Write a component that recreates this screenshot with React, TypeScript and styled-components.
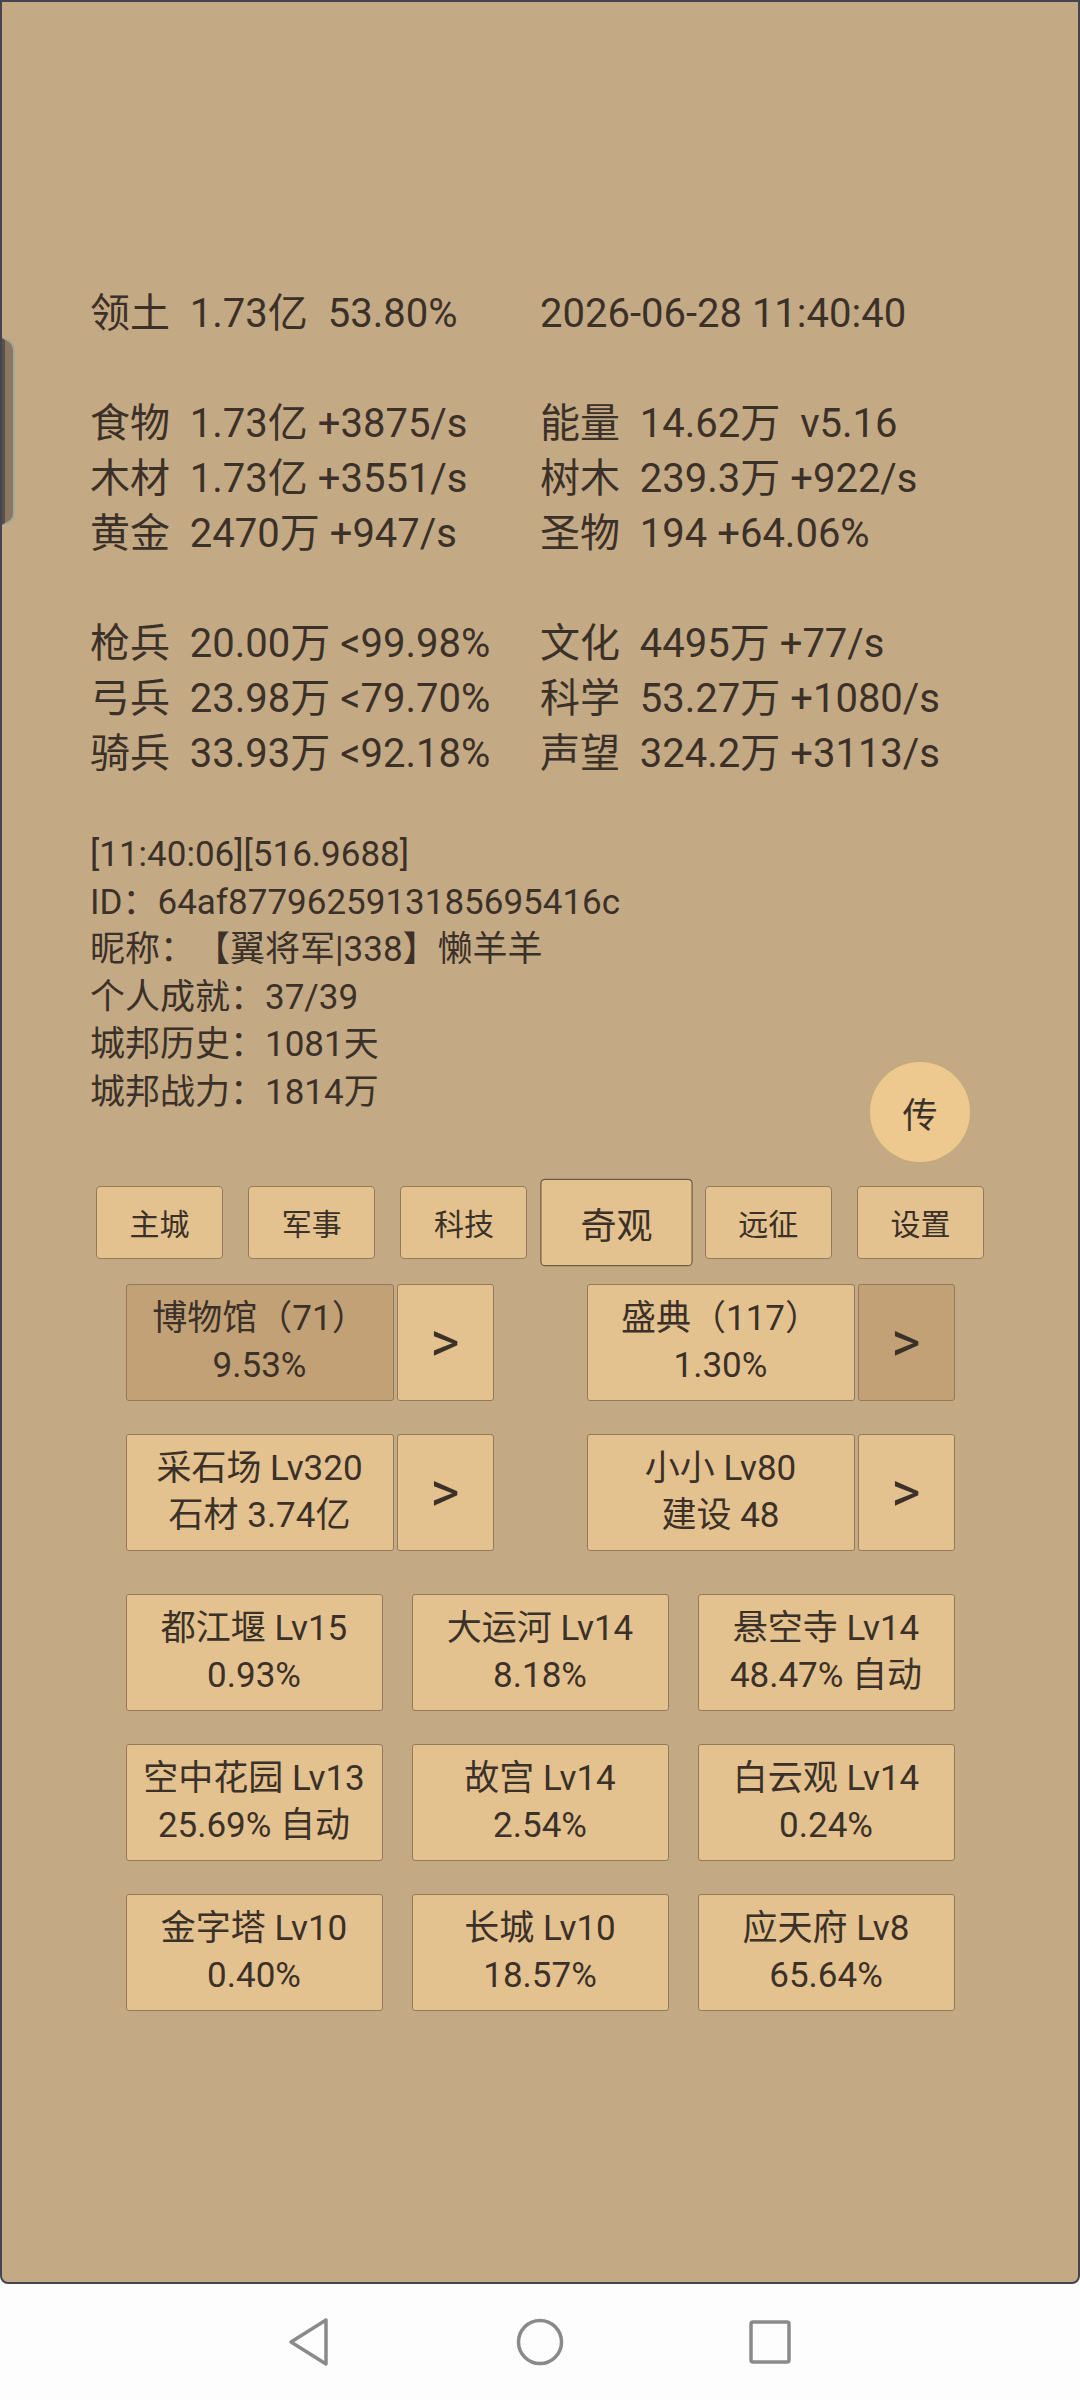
import styled, { createGlobalStyle } from 'styled-components'

const GlobalStyle = createGlobalStyle`
  html, body {
    margin: 0;
    padding: 0;
    background: #fdfdfd;
  }
  * {
    box-sizing: border-box;
  }
`

const FONT = `Roboto, "Noto Sans CJK SC", sans-serif`

const Phone = styled.div`
  width: 1080px;
  height: 2400px;
  display: flex;
  flex-direction: column;
  font-family: ${FONT};
  color: #3b3128;
  text-spacing-trim: space-all;
`

const Screen = styled.div`
  position: relative;
  height: 2284px;
  background: #c4a985;
  border: 2px solid #434652;
  border-radius: 0 0 8px 8px;
  display: flex;
  flex-direction: column;
`

const ScrollHandle = styled.div`
  position: absolute;
  left: 0;
  top: 336px;
  width: 13px;
  height: 187px;
  background: #8a7761;
  border: 2px solid #a3a896;
  border-left: 3px solid #5b5148;
  border-radius: 0 12px 12px 0;
`

const Stats = styled.div`
  padding: 284px 0 0 88px;
  display: flex;
  flex-direction: column;
  gap: 55px;
`

const StatGroup = styled.div`
  display: grid;
  grid-template-columns: 450px 1fr;
  grid-auto-rows: 55px;
  font-size: 40px;
  line-height: 55px;
  white-space: pre;
`

const Info = styled.div`
  margin-top: 50px;
  padding-left: 88px;
  font-size: 35px;
  line-height: 47.6px;
  white-space: pre;
`

const FloatButton = styled.div`
  position: absolute;
  left: 868px;
  top: 1060px;
  width: 100px;
  height: 100px;
  border-radius: 50%;
  background: #edc98f;
  display: flex;
  align-items: center;
  justify-content: center;
  font-size: 35px;
`

const Tabs = styled.div`
  margin-top: 69px;
  display: flex;
  justify-content: center;
  gap: 25.2px;
`

const Tab = styled.div<{ $active?: boolean }>`
  width: 127px;
  height: 73px;
  display: flex;
  align-items: center;
  justify-content: center;
  background: #e3c28f;
  border: 1px solid ${(p) => (p.$active ? '#6e5b43' : '#94795a')};
  border-radius: 4px;
  font-size: 30px;
  transform: ${(p) => (p.$active ? 'scale(1.2)' : 'none')};
`

const PairRows = styled.div`
  margin-top: 25px;
  display: flex;
  flex-direction: column;
  gap: 33px;
`

const PairRow = styled.div`
  display: flex;
  justify-content: center;
  gap: 93px;
`

const Pair = styled.div`
  display: flex;
  gap: 3px;
`

const Card = styled.div<{ $dark?: boolean; $width: number }>`
  width: ${(p) => p.$width}px;
  height: 117px;
  display: flex;
  flex-direction: column;
  align-items: center;
  justify-content: center;
  text-align: center;
  background: ${(p) => (p.$dark ? '#c2a177' : '#e3c28f')};
  border: 1px solid #94795a;
  border-radius: 3px;
  font-size: 35px;
  line-height: 47px;
  white-space: pre;
`

const Arrow = styled(Card)`
  font-size: 56px;
`

const WonderGrid = styled.div`
  margin: 43px auto 0;
  display: grid;
  grid-template-columns: repeat(3, 257px);
  grid-auto-rows: 117px;
  column-gap: 29px;
  row-gap: 33px;
`

const NavBar = styled.div`
  flex: 1;
  display: flex;
  align-items: center;
  justify-content: center;
`

const NavSlot = styled.div`
  width: 230px;
  display: flex;
  justify-content: center;
`

const stats = [
  [['领土  1.73亿  53.80%', '2026-06-28 11:40:40']],
  [
    ['食物  1.73亿 +3875/s', '能量  14.62万  v5.16'],
    ['木材  1.73亿 +3551/s', '树木  239.3万 +922/s'],
    ['黄金  2470万 +947/s', '圣物  194 +64.06%'],
  ],
  [
    ['枪兵  20.00万 <99.98%', '文化  4495万 +77/s'],
    ['弓兵  23.98万 <79.70%', '科学  53.27万 +1080/s'],
    ['骑兵  33.93万 <92.18%', '声望  324.2万 +3113/s'],
  ],
]

const info = [
  '[11:40:06][516.9688]',
  'ID：64af8779625913185695416c',
  '昵称：【翼将军|338】懒羊羊',
  '个人成就：37/39',
  '城邦历史：1081天',
  '城邦战力：1814万',
]

const tabs = ['主城', '军事', '科技', '奇观', '远征', '设置']

const pairs = [
  [
    { text: '博物馆（71）\n9.53%', dark: true, arrowDark: false },
    { text: '盛典（117）\n1.30%', dark: false, arrowDark: true },
  ],
  [
    { text: '采石场 Lv320\n石材 3.74亿', dark: false, arrowDark: false },
    { text: '小小 Lv80\n建设 48', dark: false, arrowDark: false },
  ],
]

const wonders = [
  '都江堰 Lv15\n0.93%',
  '大运河 Lv14\n8.18%',
  '悬空寺 Lv14\n48.47% 自动',
  '空中花园 Lv13\n25.69% 自动',
  '故宫 Lv14\n2.54%',
  '白云观 Lv14\n0.24%',
  '金字塔 Lv10\n0.40%',
  '长城 Lv10\n18.57%',
  '应天府 Lv8\n65.64%',
]

const BackIcon = () => (
  <svg width="46" height="52" viewBox="0 0 46 52">
    <path
      d="M39 4 L39 48 L4 26 Z"
      fill="none"
      stroke="#8a8a8a"
      strokeWidth="3.5"
      strokeLinejoin="round"
    />
  </svg>
)

const HomeIcon = () => (
  <svg width="50" height="50" viewBox="0 0 50 50">
    <circle cx="25" cy="25" r="21.5" fill="none" stroke="#8a8a8a" strokeWidth="3.5" />
  </svg>
)

const RecentIcon = () => (
  <svg width="46" height="46" viewBox="0 0 46 46">
    <rect x="4" y="3" width="38" height="40" rx="2" fill="none" stroke="#8a8a8a" strokeWidth="3.5" />
  </svg>
)

export default function App() {
  return (
    <>
      <GlobalStyle />
      <Phone>
        <Screen>
          <ScrollHandle />
          <Stats>
            {stats.map((group, gi) => (
              <StatGroup key={gi}>
                {group.flat().map((cell, ci) => (
                  <span key={ci}>{cell}</span>
                ))}
              </StatGroup>
            ))}
          </Stats>
          <Info>
            {info.map((line) => (
              <div key={line}>{line}</div>
            ))}
          </Info>
          <FloatButton>传</FloatButton>
          <Tabs>
            {tabs.map((t) => (
              <Tab key={t} $active={t === '奇观'}>
                {t}
              </Tab>
            ))}
          </Tabs>
          <PairRows>
            {pairs.map((row, ri) => (
              <PairRow key={ri}>
                {row.map((p) => (
                  <Pair key={p.text}>
                    <Card $width={268} $dark={p.dark}>
                      {p.text}
                    </Card>
                    <Arrow $width={97} $dark={p.arrowDark}>
                      &gt;
                    </Arrow>
                  </Pair>
                ))}
              </PairRow>
            ))}
          </PairRows>
          <WonderGrid>
            {wonders.map((w) => (
              <Card key={w} $width={257}>
                {w}
              </Card>
            ))}
          </WonderGrid>
        </Screen>
        <NavBar>
          <NavSlot>
            <BackIcon />
          </NavSlot>
          <NavSlot>
            <HomeIcon />
          </NavSlot>
          <NavSlot>
            <RecentIcon />
          </NavSlot>
        </NavBar>
      </Phone>
    </>
  )
}
